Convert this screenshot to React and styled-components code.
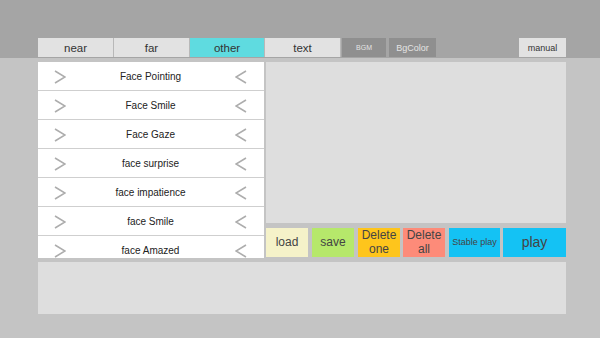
import React from "react";
import styled, { createGlobalStyle } from "styled-components";

const GlobalStyle = createGlobalStyle`
  html, body {
    margin: 0;
    padding: 0;
    background: #c4c4c4;
    font-family: "Liberation Sans", Arial, sans-serif;
  }
`;

const Page = styled.div`
  width: 600px;
  height: 338px;
  background: #c4c4c4;
  overflow: hidden;
`;

const TopBar = styled.div`
  height: 58px;
  background: #a5a5a5;
  display: flex;
  align-items: flex-end;
  padding: 0 34px 1px 38px;
  box-sizing: border-box;
`;

const Tab = styled.div`
  width: ${(p) => p.w}px;
  height: 19px;
  box-sizing: border-box;
  background: ${(p) => (p.active ? "#5fdbe0" : "#e2e2e2")};
  border-right: 1px solid #b8b8b8;
  display: flex;
  align-items: center;
  justify-content: center;
  font-size: 11.5px;
  color: #333;
`;

const GrayButton = styled.div`
  width: ${(p) => p.w}px;
  height: 19px;
  margin-left: ${(p) => p.ml}px;
  background: #8f8f8f;
  color: #e4e4e4;
  font-size: ${(p) => p.fs}px;
  display: flex;
  align-items: center;
  justify-content: center;
`;

const Spacer = styled.div`
  flex: 1;
`;

const ManualButton = styled.div`
  width: 47px;
  height: 19px;
  background: #e2e2e2;
  color: #333;
  font-size: 9px;
  display: flex;
  align-items: center;
  justify-content: center;
`;

const Main = styled.div`
  padding: 4px 34px 0 38px;
  display: flex;
  flex-direction: column;
  gap: 4px;
`;

const Upper = styled.div`
  display: flex;
  gap: 2px;
  height: 196px;
`;

const List = styled.div`
  width: 226px;
  height: 196px;
  overflow: hidden;
  background: #fff;
`;

const Row = styled.div`
  height: 28px;
  border-bottom: 1px solid #cfcfcf;
  display: flex;
  align-items: center;
  padding: 1px 17px 0 16px;
  box-sizing: border-box;
  height: 29px;
  font-size: 10px;
  color: #222;
`;

const RowLabel = styled.div`
  flex: 1;
  text-align: center;
`;

const RightCol = styled.div`
  width: 300px;
  display: flex;
  flex-direction: column;
  gap: 5px;
`;

const Preview = styled.div`
  height: 161px;
  background: #dedede;
`;

const Buttons = styled.div`
  display: flex;
  height: 29px;
`;

const ActionButton = styled.div`
  width: ${(p) => p.w}px;
  margin-right: ${(p) => p.mr || 0}px;
  background: ${(p) => p.bg};
  color: #444;
  font-size: ${(p) => p.fs}px;
  line-height: 1.12;
  display: flex;
  align-items: center;
  justify-content: center;
  text-align: center;
`;

const Bottom = styled.div`
  height: 52px;
  background: #dedede;
`;

const Chevron = ({ dir }) => (
  <svg width="12" height="14" viewBox="0 0 12 14">
    <polyline
      points={dir === "right" ? "1,1 11,7 1,13" : "11,1 1,7 11,13"}
      fill="none"
      stroke="#adadad"
      strokeWidth="1.6"
    />
  </svg>
);

const items = [
  "Face Pointing",
  "Face Smile",
  "Face Gaze",
  "face surprise",
  "face impatience",
  "face Smile",
  "face Amazed",
];

export default function App() {
  return (
    <Page>
      <GlobalStyle />
      <TopBar>
        <Tab w={76}>near</Tab>
        <Tab w={76}>far</Tab>
        <Tab w={75} active>other</Tab>
        <Tab w={76}>text</Tab>
        <GrayButton w={44} ml={1} fs={7}>BGM</GrayButton>
        <GrayButton w={47} ml={3} fs={9}>BgColor</GrayButton>
        <Spacer />
        <ManualButton>manual</ManualButton>
      </TopBar>
      <Main>
        <Upper>
          <List>
            {items.map((label, i) => (
              <Row key={i}>
                <Chevron dir="right" />
                <RowLabel>{label}</RowLabel>
                <Chevron dir="left" />
              </Row>
            ))}
          </List>
          <RightCol>
            <Preview />
            <Buttons>
              <ActionButton w={42} mr={4} bg="#f5f2c9" fs={12}>load</ActionButton>
              <ActionButton w={42} mr={4} bg="#b6e86b" fs={12}>save</ActionButton>
              <ActionButton w={42} mr={3} bg="#fec51c" fs={12}>Delete<br />one</ActionButton>
              <ActionButton w={42} mr={4} bg="#fd8b79" fs={12}>Delete<br />all</ActionButton>
              <ActionButton w={51} mr={3} bg="#14c2f4" fs={9}>Stable play</ActionButton>
              <ActionButton w={63} bg="#14c2f4" fs={14}>play</ActionButton>
            </Buttons>
          </RightCol>
        </Upper>
        <Bottom />
      </Main>
    </Page>
  );
}
